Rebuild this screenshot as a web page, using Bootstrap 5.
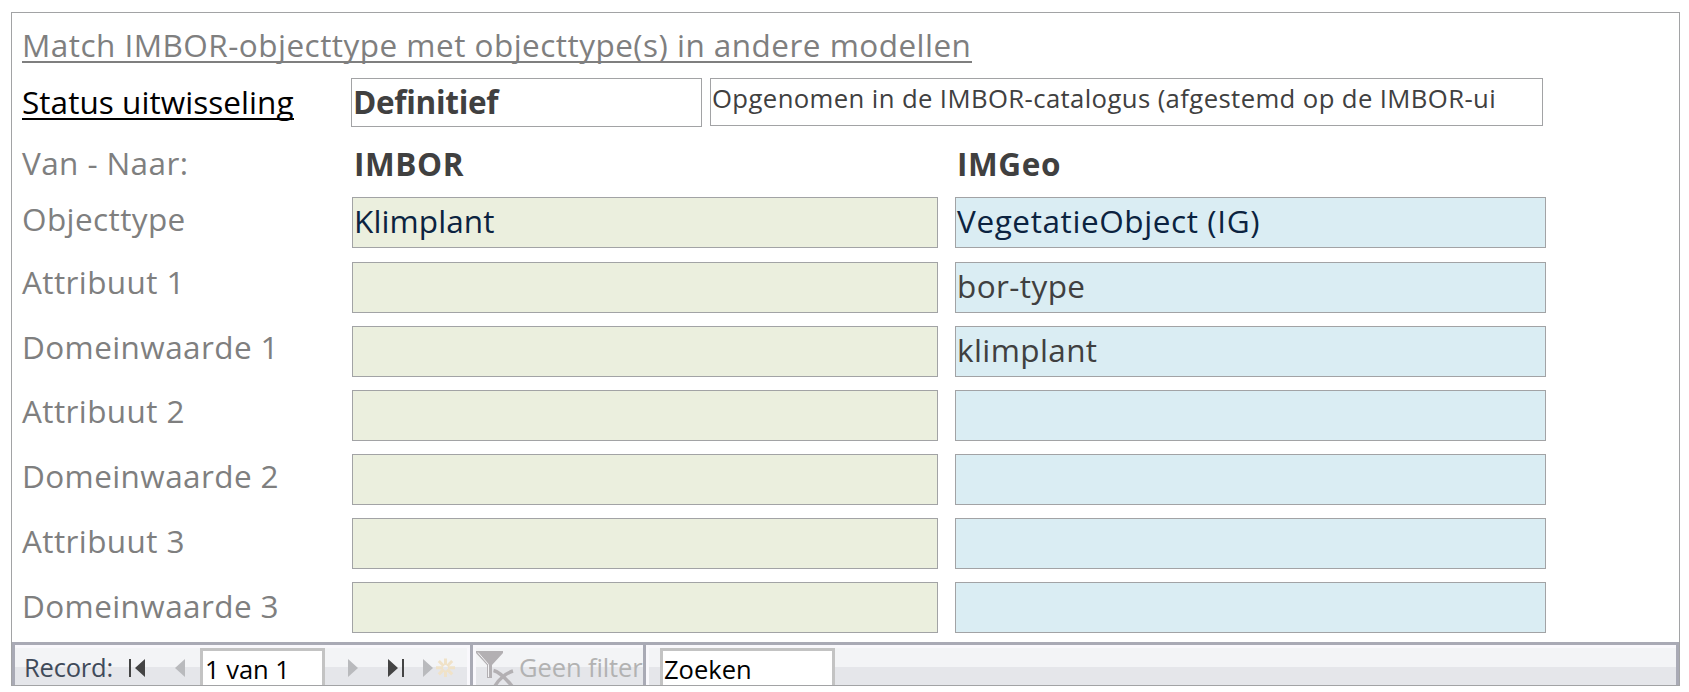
<!DOCTYPE html>
<html lang="nl">
<head>
<meta charset="utf-8">
<title>Match IMBOR-objecttype</title>
<link rel="stylesheet" href="https://cdn.jsdelivr.net/npm/bootstrap@5.3.0/dist/css/bootstrap.min.css">
<style>
  body { font-family: "Open Sans", "Noto Sans", sans-serif; background: #fff; height: 692px; padding: 12px 9px 0 11px; overflow: hidden; }
  .form-frame { width: 1669px; height: 674px; border: 1px solid #a2a3a5; overflow: hidden; }
  .form-body { height: 629px; flex: none; padding-left: 10px; font-size: 31.5px; line-height: 40px; color: #7f7f7f; white-space: nowrap; }
  .form-body > div { flex-shrink: 0; }
  .uline { align-self: flex-start; border-bottom: 2px solid currentColor; }
  .form-title { height: 33px; line-height: 30px; margin-top: 17px; width: 950px; letter-spacing: .47px; }
  .status-row { height: 49px; margin-top: 15px; }
  .status-label { height: 42px; line-height: 48px; width: 272px; color: #000; margin-right: 57px; letter-spacing: .05px; }
  .field { border: 1px solid #a2a3a5; color: #404040; overflow: hidden; padding-left: 1px; }
  .f-status { width: 351px; height: 49px; line-height: 46px; margin-right: 8px; letter-spacing: -.3px; }
  .f-note { width: 833px; height: 48px; font-size: 25.7px; line-height: 39px; letter-spacing: .39px; }
  .head-row { height: 70px; padding-top: 16px; color: #404040; }
  .head-row .fw-bold { padding-top: 1px; padding-left: 2px; letter-spacing: .6px; }
  .lbl { width: 330px; flex: none; color: #7f7f7f; letter-spacing: .4px; }
  .col-a { width: 586px; margin-right: 17px; flex: none; }
  .col-b { width: 591px; flex: none; }
  .map-row { height: 51px; margin-bottom: 13px; }
  .map-row .field { height: 51px; line-height: 46px; }
  .map-row .col-a { letter-spacing: .1px; }
  .map-row .col-b { letter-spacing: .4px; }
  .map-row.first { margin-bottom: 14px; }
  .map-row.first .col-b { letter-spacing: .6px; }
  .map-row:last-child { margin-bottom: 0; }
  .map-row .lbl { margin-top: var(--shift); }
  .green { background: #ebefde; }
  .blue { background: #daedf3; }
  .ink { color: #0b2340; }

  .record-bar { height: 43px; flex: none; border: 3px solid #a9aab5; border-bottom: 0; color: #404a5a; font-size: 25.5px; line-height: 39px; white-space: nowrap; background: #a9aab5; }
  .pane { border-top: 3px solid #f9f8fc; background: linear-gradient(#f3f4f6 19px, #e5e6ea 19px); overflow: hidden; height: 40px; }
  .pane-nav { width: 455px; border-right: 3px solid #f9f8fc; margin-right: 3px; }
  .pane-filter { width: 170px; border-left: 3px solid #f9f8fc; margin-right: 3px; color: #b2b2b2; letter-spacing: -.1px; }
  .pane-find { border-left: 3px solid #f9f8fc; }
  .rec-label { width: 103px; padding-left: 9px; letter-spacing: -.2px; }
  .nav-box { border: 3px solid #c3c3c3; border-bottom: 0; background: #fff; color: #000; height: 37px; flex: none; padding-left: 1px; line-height: 37px; }
  .w-rec { width: 125px; padding-left: 2px; }
  .w-find { width: 175px; margin-left: 11px; }
  svg { display: block; flex: none; }
</style>
</head>
<body>
<main class="form-frame d-flex flex-column">
  <section class="form-body d-flex flex-column">
    <div class="form-title uline">Match IMBOR-objecttype met objecttype(s) in andere modellen</div>
    <div class="status-row d-flex">
      <div class="status-label uline">Status uitwisseling</div>
      <div class="field f-status fw-bold">Definitief</div>
      <div class="field f-note">Opgenomen in de IMBOR-catalogus (afgestemd op de IMBOR-ui</div>
    </div>
    <div class="head-row d-flex">
      <div class="lbl">Van - Naar:</div>
      <div class="col-a fw-bold">IMBOR</div>
      <div class="col-b fw-bold">IMGeo</div>
    </div>
    <div class="map-row first d-flex" style="--shift:2px"><div class="lbl">Objecttype</div><div class="field col-a green ink">Klimplant</div><div class="field col-b blue ink">VegetatieObject (IG)</div></div>
    <div class="map-row d-flex" style="--shift:0px"><div class="lbl">Attribuut 1</div><div class="field col-a green"></div><div class="field col-b blue">bor-type</div></div>
    <div class="map-row d-flex" style="--shift:1px"><div class="lbl">Domeinwaarde 1</div><div class="field col-a green"></div><div class="field col-b blue">klimplant</div></div>
    <div class="map-row d-flex" style="--shift:1px"><div class="lbl">Attribuut 2</div><div class="field col-a green"></div><div class="field col-b blue"></div></div>
    <div class="map-row d-flex" style="--shift:2px"><div class="lbl">Domeinwaarde 2</div><div class="field col-a green"></div><div class="field col-b blue"></div></div>
    <div class="map-row d-flex" style="--shift:3px"><div class="lbl">Attribuut 3</div><div class="field col-a green"></div><div class="field col-b blue"></div></div>
    <div class="map-row d-flex" style="--shift:4px"><div class="lbl">Domeinwaarde 3</div><div class="field col-a green"></div><div class="field col-b blue"></div></div>
  </section>
  <footer class="record-bar d-flex">
    <div class="pane pane-nav d-flex">
      <div class="rec-label">Record:</div>
      <svg width="82" height="37"><path d="M11 11h2v18h-2zM27 11v18l-10-9z" fill="#444"/><path d="M67 11v18l-10-9z" fill="#b9babd"/></svg>
      <div class="nav-box w-rec">1 van 1</div>
      <svg width="142" height="37"><path d="M23 11v18l10-9z" fill="#b9babd"/><path d="M63 11v18l10-9zM77 11h2v18h-2z" fill="#444"/><path d="M98 11v18l10-9z" fill="#b9babd"/>
        <path d="M120.500 10.500v6.500M120.500 22.500v6.500M111 19.700h7M123 19.700h7M113.800 13l5 5M122.200 21.400l5 5M113.800 26.400l5-5M122.200 18l5-5" stroke="#f0e2c8" stroke-width="3" fill="none"/></svg>
    </div>
    <div class="pane pane-filter d-flex">
      <svg width="43" height="37"><path d="M0 3h27v2L16 17v13h-5V17L0 5z" fill="#b3b0b3"/><path d="M2 4.500L12.500 16.500V29" stroke="#f3f3f5" stroke-width="1" fill="none"/><path d="M17.500 22.500C24 24 31 32 36 38M37 23C30 25 22 32 19 38" stroke="#b3b0b3" stroke-width="3.500" fill="none"/></svg>
      <div>Geen filter</div>
    </div>
    <div class="pane pane-find d-flex flex-grow-1">
      <div class="nav-box w-find">Zoeken</div>
    </div>
  </footer>
</main>
<script src="https://cdn.jsdelivr.net/npm/bootstrap@5.3.0/dist/js/bootstrap.bundle.min.js"></script>
</body>
</html>
